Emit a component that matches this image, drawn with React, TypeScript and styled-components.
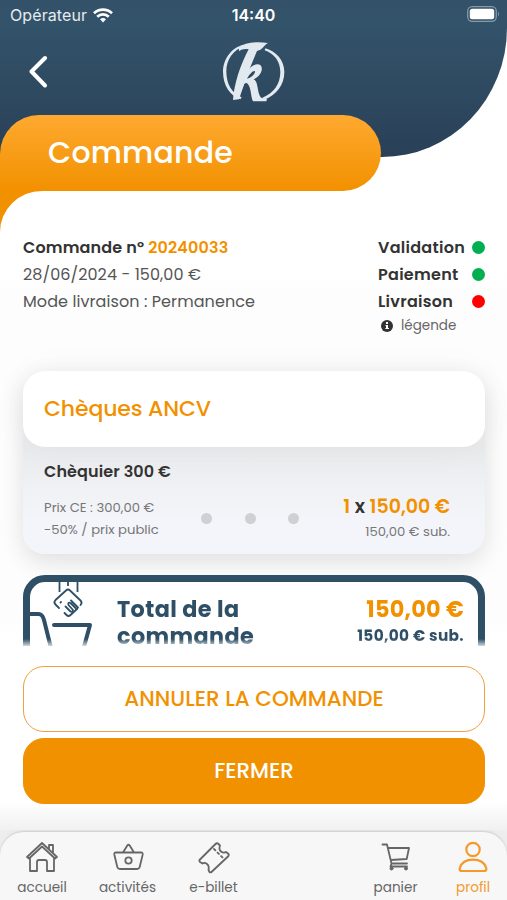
import React from "react";
import styled, { createGlobalStyle } from "styled-components";

const ORANGE = "#f29100";
const NAVY = "#2e4f66";

const GlobalStyle = createGlobalStyle`
  * { box-sizing: border-box; }
  body { margin: 0; background: #fff; }
  svg { display: block; }
`;

const Screen = styled.div`
  width: 507px;
  height: 900px;
  overflow: hidden;
  display: flex;
  flex-direction: column;
  background: #fff;
  color: #555;
  font-family: Poppins, Inter, sans-serif;
`;

const Header = styled.header`
  flex: none;
  height: 157px;
  background: linear-gradient(180deg, #335269 0, #33536a 25px, #294057 157px);
  border-bottom-right-radius: 125px 129px;
  color: #fff;
`;

const StatusBar = styled.div`
  display: grid;
  grid-template-columns: 1fr auto 1fr;
  align-items: center;
  height: 30px;
  padding: 0 7px 0 10px;
  font-family: Inter, sans-serif;
  font-size: 16px;
`;

const Carrier = styled.div`
  display: flex;
  align-items: center;
  gap: 6px;
  color: #e6ebef;
  letter-spacing: 0.1px;
`;

const Clock = styled.div`
  margin-right: 3px;
  font-weight: 600;
  color: #fff;
`;

const BatterySlot = styled.div`
  justify-self: end;
  margin-top: -2px;
`;

const Toolbar = styled.div`
  display: grid;
  grid-template-columns: 1fr 80px 1fr;
  align-items: center;
  height: 82px;
  padding: 0 25px 0 28px;
`;

const TitleTab = styled.h1`
  flex: none;
  width: 381px;
  height: 76px;
  margin: -42px 0 0;
  padding-left: 48px;
  line-height: 76px;
  border-radius: 39px 38px 38px 0;
  background: linear-gradient(180deg, #fea930, ${ORANGE});
  color: #fff;
  font-size: 30px;
  font-weight: 500;
  letter-spacing: 0.2px;
`;

const Sheet = styled.main`
  flex: none;
  height: 455px;
  overflow: hidden;
  background: linear-gradient(${ORANGE}, ${ORANGE}) 0 0 / 42px 41px no-repeat;
`;

const SheetBody = styled.div`
  height: 100%;
  padding: 43px 22px 0 23px;
  border-top-left-radius: 42px 41px;
  background: linear-gradient(180deg, #fff 75px, #fdfdfd 110px, #fdfdfd 420px, #fff 455px);
`;

const Summary = styled.section`
  display: flex;
  justify-content: space-between;
  height: 137px;
  font-size: 16px;
  line-height: 27px;
`;

const Line = styled.div<{ $bold?: boolean }>`
  font-weight: ${(p) => (p.$bold ? 600 : 400)};
  color: ${(p) => (p.$bold ? "#333" : "#555")};
  letter-spacing: ${(p) => (p.$bold ? 0.14 : 0.08)}px;
  white-space: nowrap;
`;

const Accent = styled.span`
  color: ${ORANGE};
`;

const StatusList = styled.div`
  width: 107px;
`;

const StatusRow = styled.div`
  display: flex;
  align-items: center;
  justify-content: space-between;
  font-weight: 600;
  color: #333;
  letter-spacing: 0.28px;
`;

const StatusDot = styled.span<{ $color: string }>`
  width: 13px;
  height: 13px;
  border-radius: 50%;
  background: ${(p) => p.$color};
`;

const Legend = styled.div`
  display: flex;
  align-items: center;
  gap: 8px;
  height: 21px;
  padding-left: 3px;
  font-size: 13.5px;
  color: #666;
`;

const Card = styled.section`
  height: 183px;
  border-radius: 22px;
  background: linear-gradient(180deg, #e9eaec 76px, #eff1f4 115px, #f3f5fa 150px);
  box-shadow: 0 8px 24px rgba(0, 0, 0, 0.12);
`;

const CardTitle = styled.h2`
  height: 76px;
  margin: 0;
  padding-left: 21px;
  line-height: 76px;
  border-radius: 22px;
  background: #fff;
  box-shadow: 0 0 36px rgba(0, 0, 0, 0.04);
  color: ${ORANGE};
  font-size: 22px;
  font-weight: 500;
  letter-spacing: -0.14px;
`;

const CardContent = styled.div`
  padding: 13px 35px 0 21px;
`;

const ItemName = styled.div`
  height: 24px;
  line-height: 24px;
  font-size: 16px;
  font-weight: 600;
  letter-spacing: 0.1px;
  color: #333;
`;

const ItemRow = styled.div`
  display: grid;
  grid-template-columns: 157px 98px 1fr;
  align-items: center;
  margin-top: 9px;
`;

const PriceNotes = styled.div`
  font-size: 13.2px;
  line-height: 21.5px;
  color: #777;
  white-space: nowrap;
`;

const Dots = styled.div`
  display: flex;
  justify-content: space-between;
`;

const Dot = styled.span`
  width: 11px;
  height: 11px;
  border-radius: 50%;
  background: #cfd0d3;
`;

const Amounts = styled.div`
  padding-top: 1px;
  text-align: right;
  white-space: nowrap;
`;

const Amount = styled.div`
  font-size: 19px;
  line-height: 25px;
  font-weight: 600;
  color: ${ORANGE};
`;

const Times = styled.span`
  color: #333;
`;

const Subsidy = styled.div`
  padding-top: 1px;
  font-size: 13.2px;
  line-height: 24px;
  color: #777;
`;

const TotalViewport = styled.div`
  height: 74px;
  margin-top: 21px;
  overflow: hidden;
  mask-image: linear-gradient(#000 64px, transparent 73px);
`;

const TotalBox = styled.section`
  display: grid;
  grid-template-columns: 87px 1fr auto;
  height: 110px;
  border: 7px solid ${NAVY};
  border-radius: 22px;
  padding-right: 14px;
  background: #fff;
  color: ${NAVY};
  font-weight: 700;
`;

const TotalLabel = styled.div`
  padding-top: 14px;
  font-size: 22.3px;
  line-height: 27px;
  letter-spacing: 0.4px;
`;

const TotalAmounts = styled.div`
  padding-top: 14px;
  text-align: right;
  font-size: 15.3px;
  line-height: 25px;
  letter-spacing: 0.35px;
`;

const TotalPrice = styled.div`
  color: ${ORANGE};
  font-size: 22.4px;
  line-height: 27px;
  letter-spacing: 0.25px;
`;

const Actions = styled.div`
  flex: none;
  display: flex;
  flex-direction: column;
  gap: 6px;
  height: 186px;
  padding: 20px 22px 0 23px;
  background: linear-gradient(180deg, #fff 155px, #f0f0f0 186px);
`;

const Button = styled.button<{ $primary?: boolean }>`
  height: 66px;
  padding: 0 0 1px;
  border: 1px solid ${(p) => (p.$primary ? ORANGE : "#f0a040")};
  border-radius: 21px;
  background: ${(p) => (p.$primary ? ORANGE : "#fff")};
  color: ${(p) => (p.$primary ? "#fff" : ORANGE)};
  font: 500 21.5px Poppins, Inter, sans-serif;
`;

const NavBar = styled.nav`
  flex: none;
  display: grid;
  grid-template-columns: 84px 87px 85px auto 87px 68px;
  justify-content: start;
  height: 68px;
  border-radius: 24px 24px 0 0;
  background: #f7f7f7;
  box-shadow: 0 -1px 2px rgba(0, 0, 0, 0.12), 0 -5px 20px rgba(0, 0, 0, 0.04), 0 0 0 24px #f0f0f0;
  clip-path: inset(-2px 0 0 0);
`;

const NavItem = styled.a<{ $active?: boolean }>`
  display: flex;
  flex-direction: column;
  align-items: center;
  gap: 2px;
  padding-top: 7px;
  color: ${(p) => (p.$active ? "#f39a2b" : "#666")};
  font-size: 13.6px;
  line-height: 21px;
  white-space: nowrap;
`;

const NavGap = styled.span`
  width: 96px;
`;

const line = { fill: "none", stroke: "currentColor", strokeWidth: 1.8, strokeLinejoin: "round", strokeLinecap: "round" } as const;

const Wifi = () => (
  <svg width="20" height="15" viewBox="0 0 20 15" fill="none" stroke="#fff" strokeWidth="2.7">
    <path d="M1 5.2a13 13 0 0 1 18 0M4.2 8.7a8.4 8.4 0 0 1 11.6 0" />
    <path d="M7 11.2a4.6 4.6 0 0 1 6 0l-3 3.3z" fill="#fff" stroke="none" />
  </svg>
);

const Battery = () => (
  <svg width="33" height="16" viewBox="0 0 33 16">
    <rect x=".7" y=".7" width="28.6" height="14.6" rx="4.5" fill="none" stroke="#8798a6" strokeWidth="1.3" />
    <rect x="2.8" y="2.8" width="24.4" height="10.4" rx="2.5" fill="#fff" />
    <path d="M31 5.5q2 2.500 0 5z" fill="#8798a6" />
  </svg>
);

const Back = () => (
  <svg width="22" height="34" viewBox="0 0 22 34" fill="none" stroke="#fff" strokeWidth="4" strokeLinecap="round" strokeLinejoin="round">
    <path d="M17 4 3.500 17.500 17 31.500" />
  </svg>
);

const Logo = () => (
  <svg width="80" height="74" viewBox="0 0 240 222" fill="#e2e9ef">
    <path d="M86 32C50 40 24 74 24 113c0 42 22 72 52 83l4-6C50 178 34 150 34 112 34 77 54 48 88 37z" />
    <path d="M151 43c34 10 57 37 57 71 0 39-24 69-60 83l-6-6c34-13 54-41 54-77 0-31-17-54-47-65z" />
    <path d="M72 42c16-16 48-20 87-15-12 6-14 16-23 20l-10 4c-10 24-20 47-28 69l-26 76-18 2c3-49 23-107 47-152-11-2-21-1-29 6z" />
    <path d="M84 130c12-22 27-38 43-39 14 0 17 14 10 26-5 9-13 15-21 19 15 6 9 39 22 55l18 4-2 7h-40c-7-14-5-41-16-53-3-3-7-2-10 0l-10 22z" />
    <path d="M96 134c8-14 17-24 23-23 4 2-4 17-19 22z" fill="#304a60" />
  </svg>
);

const Info = () => (
  <svg width="12" height="12" viewBox="0 0 12 12">
    <circle cx="6" cy="6" r="6" fill="#333" />
    <path d="M5 2h2v2H5zM4.500 5H7v3h1v1H4.300V8H5V6h-.5z" fill="#fff" />
  </svg>
);

const BasketDrop = () => (
  <svg width="74" height="78" viewBox="0 0 74 78" fill="none" stroke={NAVY}>
    <path d="M29.500 0v10M38 0v4M47.500 0v10" strokeWidth="1.800" />
    <g strokeWidth="1.800" strokeLinecap="round" strokeLinejoin="round">
      <path d="M29 26l-3.500-3.500q-2.200-2.200 0-4.500l10.500-9.500q2-2 4 0l10.500 10q2.200 2.200 0 4.500M47 27l-6.500 6q-2 2-4 0l-2-2" />
      <path d="m35.500 24.500 5 5q2 1 2.500-1.500l-4.500-5q-1-3 2-2l6 6 1.500-1.500-7-7M30.500 20.500l.5-.5" />
    </g>
    <path d="M0 32h8.500q4 0 5.500 6L22 70M24 43h36l-8 29H25" strokeWidth="4" strokeLinecap="round" strokeLinejoin="round" />
  </svg>
);

const HomeIcon = () => (
  <svg width="34" height="36" viewBox="0 0 34 36" {...line}>
    <path d="M2 18 17 4l15 14-2 1.500L17 7.500 4 19.500zM5 19v13h7V23q0-2 2-2h6q2 0 2 2v9h7V19M24 10V6h4v8" />
  </svg>
);

const BasketIcon = () => (
  <svg width="34" height="36" viewBox="0 0 34 36" {...line}>
    <path d="M5 13.500h25q2 0 1.700 2l-3 12.500q-.5 2-2.500 2H8.800q-2 0-2.500-2l-3-12.500Q3 13.500 5 13.500zM12 13.500l4.300-7q1.200-1.500 2.400 0l4.300 7" />
    <circle cx="17.500" cy="21.500" r="3.200" />
  </svg>
);

const TicketIcon = () => (
  <svg width="34" height="36" viewBox="0 0 34 36" {...line}>
    <path d="m2.500 21 16-16q1.500-1.500 3 0l1.500 1.500q-1.500 4 1 6t5 .5l2 1.500q1.500 1.500 0 3L15 32.500q-1.500 1.500-2.500.5l-1-2q1-4-1.500-6t-4.500-.5L3 23q-1-1-.5-2z" />
    <path d="m17 10 9 9" strokeDasharray="2 3" />
  </svg>
);

const CartIcon = () => (
  <svg width="34" height="36" viewBox="0 0 34 36" {...line}>
    <path d="M3.500 5.500H8l4.500 19H28M9 9h21l-2.300 11-16 1M12.500 24.500l-1 3H28" />
    <circle cx="12.500" cy="29.500" r="1.500" fill="currentColor" strokeWidth="1" />
    <circle cx="27" cy="29.500" r="1.500" fill="currentColor" strokeWidth="1" />
  </svg>
);

const ProfileIcon = () => (
  <svg width="34" height="36" viewBox="0 0 34 36" {...line} strokeWidth="2.200">
    <circle cx="17" cy="10.500" r="6.700" />
    <path d="M6 32q-3 0-2.200-3C5.500 23.300 11 20.600 17 20.600s11.500 2.700 13.200 8.400q.8 3-2.200 3z" />
  </svg>
);

export default function App() {
  return (
    <>
      <GlobalStyle />
      <Screen>
        <Header>
          <StatusBar>
            <Carrier>Opérateur <Wifi /></Carrier>
            <Clock>14:40</Clock>
            <BatterySlot><Battery /></BatterySlot>
          </StatusBar>
          <Toolbar>
            <Back />
            <Logo />
          </Toolbar>
        </Header>
        <TitleTab>Commande</TitleTab>
        <Sheet>
          <SheetBody>
            <Summary>
              <div>
                <Line $bold>Commande n° <Accent>20240033</Accent></Line>
                <Line>28/06/2024 - 150,00 €</Line>
                <Line>Mode livraison : Permanence</Line>
              </div>
              <StatusList>
                <StatusRow>Validation <StatusDot $color="#00b050" /></StatusRow>
                <StatusRow>Paiement <StatusDot $color="#00b050" /></StatusRow>
                <StatusRow>Livraison <StatusDot $color="#ff0000" /></StatusRow>
                <Legend><Info />légende</Legend>
              </StatusList>
            </Summary>
            <Card>
              <CardTitle>Chèques ANCV</CardTitle>
              <CardContent>
                <ItemName>Chèquier 300 €</ItemName>
                <ItemRow>
                  <PriceNotes>
                    <div>Prix CE : 300,00 €</div>
                    <div>-50% / prix public</div>
                  </PriceNotes>
                  <Dots><Dot /><Dot /><Dot /></Dots>
                  <Amounts>
                    <Amount>1 <Times>x</Times> 150,00 €</Amount>
                    <Subsidy>150,00 € sub.</Subsidy>
                  </Amounts>
                </ItemRow>
              </CardContent>
            </Card>
            <TotalViewport>
              <TotalBox>
                <BasketDrop />
                <TotalLabel>Total de la<br />commande</TotalLabel>
                <TotalAmounts>
                  <TotalPrice>150,00 €</TotalPrice>
                  150,00 € sub.
                </TotalAmounts>
              </TotalBox>
            </TotalViewport>
          </SheetBody>
        </Sheet>
        <Actions>
          <Button>ANNULER LA COMMANDE</Button>
          <Button $primary>FERMER</Button>
        </Actions>
        <NavBar>
          <NavItem><HomeIcon />accueil</NavItem>
          <NavItem><BasketIcon />activités</NavItem>
          <NavItem><TicketIcon />e-billet</NavItem>
          <NavGap />
          <NavItem><CartIcon />panier</NavItem>
          <NavItem $active><ProfileIcon />profil</NavItem>
        </NavBar>
      </Screen>
    </>
  );
}
